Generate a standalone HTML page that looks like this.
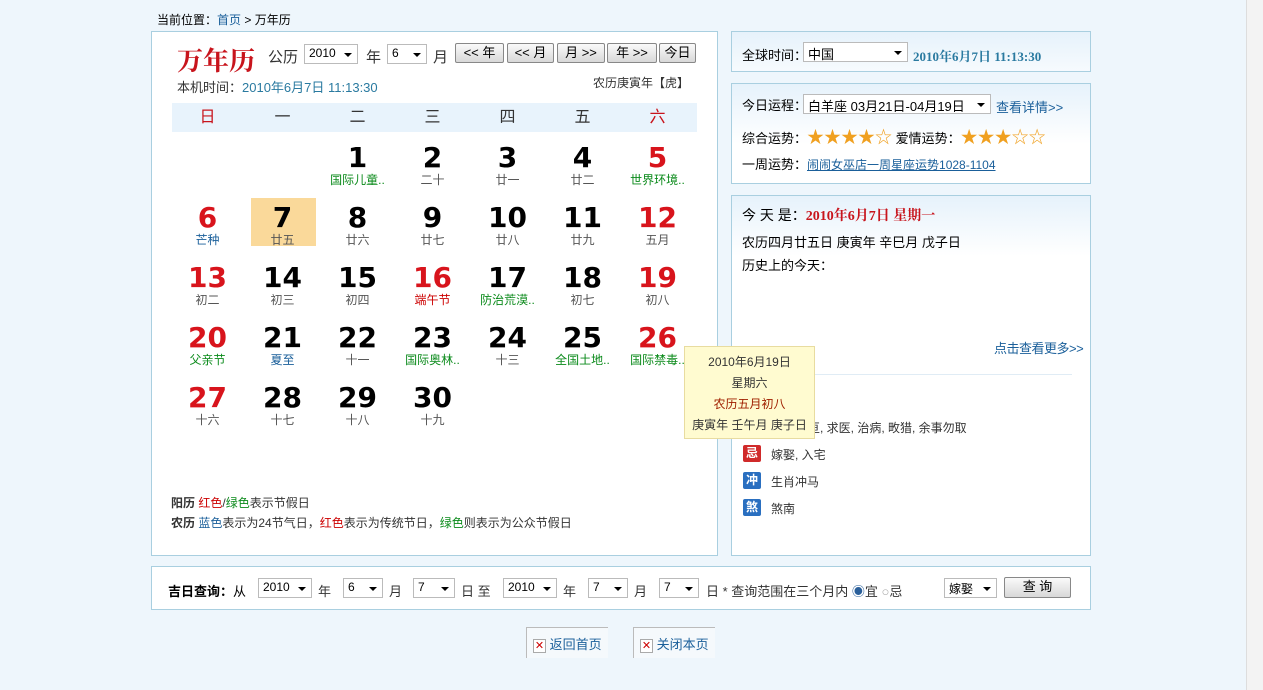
<!DOCTYPE html>
<html><head><meta charset="utf-8"><style>
*{margin:0;padding:0;box-sizing:border-box}
body{width:1263px;height:690px;background:#eef6fc;font-family:"Liberation Sans","Noto Sans CJK SC",sans-serif;font-size:12px;color:#333;position:relative;overflow:hidden}
.a{position:absolute;white-space:nowrap}
.panel{position:absolute;border:1px solid #a9cfe0;background:linear-gradient(#e6f2fb,#fff 60px)}
.sel{position:absolute;height:20px;border:1px solid #bbb;background:#fff;font-size:12px;padding:1px 4px;color:#000}
.sel:after{content:"";position:absolute;right:5px;top:8px;border:4px solid transparent;border-top:4px solid #000}
.btn{position:absolute;height:20px;border:1px solid #888;border-radius:2px;background:linear-gradient(#fafafa,#d8d8d8);font-size:13px;text-align:center;line-height:18px;color:#000}
.wk{position:absolute;top:103px;width:75px;text-align:center;font-size:16px;line-height:29px;color:#333}
.d{position:absolute;width:75px;text-align:center}
.d b{display:block;font-family:"DejaVu Sans","Liberation Sans",sans-serif;font-weight:bold;font-size:28px;line-height:30px;color:#000}
.d span{display:block;font-size:12px;line-height:14px;color:#555}
.r b{color:#d8141c}.g span{color:#0a8a1a}.bl span{color:#1a5f9a}.rs span{color:#c00}
.star{color:#f0a020;font-size:17px}
.ic{position:absolute;width:18px;height:17px;color:#fff;font-size:12px;text-align:center;line-height:17px;font-weight:bold;border-radius:2px}
</style></head><body>
<div style="position:absolute;right:0;top:0;width:17px;height:690px;background:#f3f3f3;border-left:1px solid #ddd"></div>
<div class="a" style="left:157px;top:11px;color:#000">当前位置：<span style="color:#1a5f9a">首页</span> &gt; 万年历</div>

<div class="panel" style="left:151px;top:31px;width:567px;height:525px;background:#fff"></div>
<div class="a" style="left:177px;top:41px;font-family:'Noto Serif CJK SC',serif;font-weight:bold;font-size:26px;color:#c8141c">万年历</div>
<div class="a" style="left:268px;top:46px;font-size:15px">公历</div>
<div class="sel" style="left:304px;top:44px;width:54px">2010</div>
<div class="a" style="left:366px;top:46px;font-size:15px">年</div>
<div class="sel" style="left:387px;top:44px;width:40px">6</div>
<div class="a" style="left:433px;top:46px;font-size:15px">月</div>
<div class="btn" style="left:455px;top:43px;width:49px">&lt;&lt; 年</div>
<div class="btn" style="left:507px;top:43px;width:47px">&lt;&lt; 月</div>
<div class="btn" style="left:557px;top:43px;width:48px">月 &gt;&gt;</div>
<div class="btn" style="left:607px;top:43px;width:50px">年 &gt;&gt;</div>
<div class="btn" style="left:659px;top:43px;width:37px">今日</div>
<div class="a" style="left:177px;top:77px;font-size:13px">本机时间：<span style="color:#2a7aa0">2010年6月7日 11:13:30</span></div>
<div class="a" style="left:593px;top:74px;font-size:12px">农历庚寅年【虎】</div>
<div style="position:absolute;left:172px;top:103px;width:525px;height:29px;background:#e8f3fc"></div>
<div class="wk" style="left:170px;color:#c8141c">日</div><div class="wk" style="left:245px">一</div><div class="wk" style="left:320px">二</div><div class="wk" style="left:395px">三</div><div class="wk" style="left:470px">四</div><div class="wk" style="left:545px">五</div><div class="wk" style="left:620px;color:#c8141c">六</div>
<div style="position:absolute;left:251px;top:198px;width:65px;height:48px;background:#fad99a"></div>

<div class="d g" style="left:320px;top:143px"><b>1</b><span>国际儿童..</span></div>
<div class="d" style="left:395px;top:143px"><b>2</b><span>二十</span></div>
<div class="d" style="left:470px;top:143px"><b>3</b><span>廿一</span></div>
<div class="d" style="left:545px;top:143px"><b>4</b><span>廿二</span></div>
<div class="d r g" style="left:620px;top:143px"><b>5</b><span>世界环境..</span></div>

<div class="d r bl" style="left:170px;top:203px"><b>6</b><span>芒种</span></div>
<div class="d" style="left:245px;top:203px"><b>7</b><span>廿五</span></div>
<div class="d" style="left:320px;top:203px"><b>8</b><span>廿六</span></div>
<div class="d" style="left:395px;top:203px"><b>9</b><span>廿七</span></div>
<div class="d" style="left:470px;top:203px"><b>10</b><span>廿八</span></div>
<div class="d" style="left:545px;top:203px"><b>11</b><span>廿九</span></div>
<div class="d r" style="left:620px;top:203px"><b>12</b><span>五月</span></div>

<div class="d r" style="left:170px;top:263px"><b>13</b><span>初二</span></div>
<div class="d" style="left:245px;top:263px"><b>14</b><span>初三</span></div>
<div class="d" style="left:320px;top:263px"><b>15</b><span>初四</span></div>
<div class="d r rs" style="left:395px;top:263px"><b>16</b><span>端午节</span></div>
<div class="d g" style="left:470px;top:263px"><b>17</b><span>防治荒漠..</span></div>
<div class="d" style="left:545px;top:263px"><b>18</b><span>初七</span></div>
<div class="d r" style="left:620px;top:263px"><b>19</b><span>初八</span></div>

<div class="d r g" style="left:170px;top:323px"><b>20</b><span>父亲节</span></div>
<div class="d bl" style="left:245px;top:323px"><b>21</b><span>夏至</span></div>
<div class="d" style="left:320px;top:323px"><b>22</b><span>十一</span></div>
<div class="d g" style="left:395px;top:323px"><b>23</b><span>国际奥林..</span></div>
<div class="d" style="left:470px;top:323px"><b>24</b><span>十三</span></div>
<div class="d g" style="left:545px;top:323px"><b>25</b><span>全国土地..</span></div>
<div class="d r g" style="left:620px;top:323px"><b>26</b><span>国际禁毒..</span></div>

<div class="d r" style="left:170px;top:383px"><b>27</b><span>十六</span></div>
<div class="d" style="left:245px;top:383px"><b>28</b><span>十七</span></div>
<div class="d" style="left:320px;top:383px"><b>29</b><span>十八</span></div>
<div class="d" style="left:395px;top:383px"><b>30</b><span>十九</span></div>

<div class="a" style="left:171px;top:494px"><b>阳历</b> <span style="color:#c00">红色</span>/<span style="color:#0a8a1a">绿色</span>表示节假日</div>
<div class="a" style="left:171px;top:514px"><b>农历</b> <span style="color:#1a5f9a">蓝色</span>表示为24节气日，<span style="color:#c00">红色</span>表示为传统节日，<span style="color:#0a8a1a">绿色</span>则表示为公众节假日</div>

<div class="panel" style="left:731px;top:31px;width:360px;height:41px"></div>
<div class="a" style="left:742px;top:45px;font-size:13px;color:#000">全球时间：</div>
<div class="sel" style="left:803px;top:42px;width:105px;font-size:13px">中国</div>
<div class="a" style="left:913px;top:46px;font-weight:bold;color:#2a7aa0;font-family:'Liberation Serif','Noto Serif CJK SC',serif;font-size:13px">2010年6月7日 11:13:30</div>

<div class="panel" style="left:731px;top:83px;width:360px;height:101px"></div>
<div class="a" style="left:742px;top:95px;font-size:13px;color:#000">今日运程：</div>
<div class="sel" style="left:803px;top:94px;width:188px;font-size:13px">白羊座 03月21日-04月19日</div>
<div class="a" style="left:996px;top:97px;font-size:13px;color:#1a5f9a">查看详情&gt;&gt;</div>
<div class="a" style="left:742px;top:123px;font-size:13px;color:#000">综合运势：<span class="star">★★★★☆</span> 爱情运势：<span class="star">★★★☆☆</span></div>
<div class="a" style="left:742px;top:154px;font-size:13px;color:#000">一周运势：<span style="color:#1a5f9a;text-decoration:underline;font-size:12px">闹闹女巫店一周星座运势1028-1104</span></div>

<div class="panel" style="left:731px;top:195px;width:360px;height:361px"></div>
<div class="a" style="left:742px;top:205px;font-size:14px;color:#000">今 天 是：<b style="color:#c8141c;font-family:'Liberation Serif','Noto Serif CJK SC',serif">2010年6月7日 星期一</b></div>
<div class="a" style="left:742px;top:232px;font-size:13px;color:#000">农历四月廿五日 庚寅年 辛巳月 戊子日</div>
<div class="a" style="left:742px;top:255px;font-size:13px;color:#000">历史上的今天：</div>
<div class="a" style="left:994px;top:338px;font-size:13px;color:#1a5f9a;letter-spacing:-0.5px">点击查看更多&gt;&gt;</div>
<div style="position:absolute;left:742px;top:374px;width:330px;height:1px;background:#e0ecf5"></div>
<div class="a" style="left:808px;top:419px">亘, 求医, 治病, 畋猎, 余事勿取</div>
<div class="ic" style="left:743px;top:445px;background:#d02a2a">忌</div><div class="a" style="left:771px;top:446px">嫁娶, 入宅</div>
<div class="ic" style="left:743px;top:472px;background:#2a6fc0">冲</div><div class="a" style="left:771px;top:473px">生肖冲马</div>
<div class="ic" style="left:743px;top:499px;background:#2a6fc0">煞</div><div class="a" style="left:771px;top:500px">煞南</div>

<div style="position:absolute;left:684px;top:346px;width:131px;height:93px;background:#fffbd0;border:1px solid #e8dca0;text-align:center;font-size:12px;line-height:21px;color:#333;padding-top:5px">2010年6月19日<br>星期六<br><span style="color:#a02000">农历五月初八</span><br>庚寅年 壬午月 庚子日</div>

<div class="panel" style="left:151px;top:566px;width:940px;height:44px;background:#fff"></div>
<div class="a" style="left:168px;top:581px;font-size:13px;color:#000"><b>吉日查询：</b>从</div>
<div class="sel" style="left:258px;top:578px;width:54px">2010</div><div class="a" style="left:318px;top:581px;font-size:13px">年</div>
<div class="sel" style="left:343px;top:578px;width:40px">6</div><div class="a" style="left:389px;top:581px;font-size:13px">月</div>
<div class="sel" style="left:413px;top:578px;width:42px">7</div><div class="a" style="left:461px;top:581px;font-size:13px">日 至</div>
<div class="sel" style="left:503px;top:578px;width:54px">2010</div><div class="a" style="left:563px;top:581px;font-size:13px">年</div>
<div class="sel" style="left:588px;top:578px;width:40px">7</div><div class="a" style="left:634px;top:581px;font-size:13px">月</div>
<div class="sel" style="left:659px;top:578px;width:40px">7</div><div class="a" style="left:706px;top:581px;font-size:13px">日 * 查询范围在三个月内 <span style="color:#2a5f9a">◉</span>宜 <span style="color:#aaa">○</span>忌</div>
<div class="sel" style="left:944px;top:578px;width:53px">嫁娶</div>
<div class="btn" style="left:1004px;top:577px;width:67px;height:21px">查 询</div>

<div style="position:absolute;left:526px;top:627px;width:82px;height:31px;border-left:1px solid #bbb;border-top:1px solid #bbb;background:#f5f9fc"></div>
<div class="a" style="left:533px;top:634px;font-size:13px;color:#1a5f9a"><span style="display:inline-block;width:13px;height:14px;border:1px solid #aaa;color:#c00;font-size:11px;text-align:center;line-height:12px;background:#fff">✕</span> 返回首页</div>
<div style="position:absolute;left:633px;top:627px;width:82px;height:31px;border-left:1px solid #bbb;border-top:1px solid #bbb;background:#f5f9fc"></div>
<div class="a" style="left:640px;top:634px;font-size:13px;color:#1a5f9a"><span style="display:inline-block;width:13px;height:14px;border:1px solid #aaa;color:#c00;font-size:11px;text-align:center;line-height:12px;background:#fff">✕</span> 关闭本页</div>
</body></html>
